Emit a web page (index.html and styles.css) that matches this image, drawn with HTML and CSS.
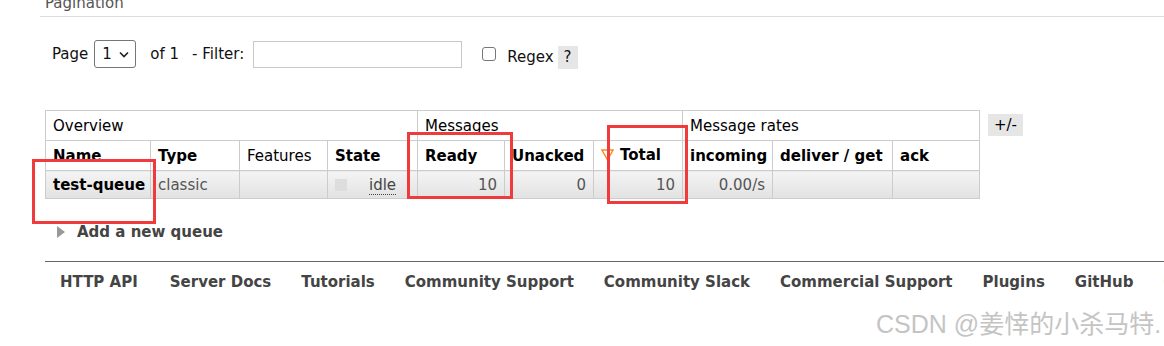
FILE: index.html
```html
<!DOCTYPE html>
<html lang="en">
<head>
    <meta charset="UTF-8">
    <meta name="viewport" content="width=device-width, initial-scale=1.0">
    <title>Queues</title>
    <link rel="stylesheet" href="styles.css">
</head>
<body>
    <div class="section">
        <h2 class="section-title">Pagination</h2>
        <div class="pagination">
            <span>Page</span>
            <span class="select">1
                <svg width="10" height="7" viewBox="0 0 10 7"><polyline points="1,1.5 5,5.5 9,1.5" fill="none" stroke="#222" stroke-width="1.6"/></svg>
            </span>
            <span class="of">of 1</span>
            <span class="filter-label">- Filter:</span>
            <input class="filter" type="text">
            <span class="checkbox"></span>
            <span class="regex">Regex</span>
            <span class="help">?</span>
        </div>
    </div>

    <div class="queues">
        <table class="list">
            <colgroup>
                <col style="width: 105px">
                <col style="width: 89px">
                <col style="width: 88px">
                <col style="width: 90px">
                <col style="width: 87px">
                <col style="width: 89px">
                <col style="width: 89px">
                <col style="width: 90px">
                <col style="width: 120px">
                <col style="width: 87px">
            </colgroup>
            <tr class="group-row">
                <th colspan="4">Overview</th>
                <th colspan="3">Messages</th>
                <th colspan="3">Message rates</th>
            </tr>
            <tr class="head-row">
                <th>Name</th>
                <th>Type</th>
                <th class="plain">Features</th>
                <th>State</th>
                <th>Ready</th>
                <th>Unacked</th>
                <th><span class="sort-arrow"><svg width="13" height="12" viewBox="0 0 13 12"><polygon points="1,1 12,1 6.5,11" fill="none" stroke="#f98a1f" stroke-width="1.4"/></svg></span>Total</th>
                <th>incoming</th>
                <th>deliver / get</th>
                <th>ack</th>
            </tr>
            <tr class="data-row">
                <td class="name">test-queue</td>
                <td>classic</td>
                <td></td>
                <td><span class="state-dot"></span><span class="state">idle</span></td>
                <td class="num">10</td>
                <td class="num">0</td>
                <td class="num">10</td>
                <td class="num">0.00/s</td>
                <td></td>
                <td></td>
            </tr>
        </table>
        <span class="toggle-cols">+/-</span>
    </div>

    <div class="add-queue"><span class="arrow-right"></span>Add a new queue</div>

    <div class="footer">
        <a href="#">HTTP API</a>
        <a href="#">Server Docs</a>
        <a href="#">Tutorials</a>
        <a href="#">Community Support</a>
        <a href="#">Community Slack</a>
        <a href="#">Commercial Support</a>
        <a href="#">Plugins</a>
        <a href="#">GitHub</a>
        <a href="#">Changelog</a>
    </div>

    <!-- annotation boxes -->
    <div class="mark mark-name"></div>
    <div class="mark mark-ready"></div>
    <div class="mark mark-total"></div>

    <div class="watermark">CSDN @姜悻的小杀马特.</div>
</body>
</html>
```

FILE: styles.css
```css
html, body {
    overflow: hidden;
}

body {
    margin: 0;
    position: relative;
    height: 346px;
    font-family: "DejaVu Sans", Verdana, sans-serif;
    font-size: 15px;
    color: #111;
    background: #fff;
}

.section {
    margin-left: 40px;
}

.section-title {
    margin: -5px 0 0;
    padding: 0 0 4px 5px;
    font-size: 15px;
    font-weight: normal;
    line-height: 17px;
    color: #555;
    border-bottom: 1px solid #ddd;
}

.pagination {
    display: flex;
    align-items: center;
    margin: 23px 0 0 12px;
    height: 28px;
}

.select {
    display: flex;
    align-items: center;
    box-sizing: border-box;
    height: 28px;
    width: 42px;
    margin-left: 6px;
    padding: 0 6px 0 7px;
    border: 1px solid #767676;
    border-radius: 3px;
    justify-content: space-between;
}

.of {
    margin-left: 14px;
}

.filter-label {
    margin-left: 13px;
}

.filter {
    box-sizing: border-box;
    width: 209px;
    height: 27px;
    margin: 0 0 0 9px;
    border: 1px solid #c8c8c8;
    padding: 0;
}

.checkbox {
    box-sizing: border-box;
    width: 14px;
    height: 14px;
    margin-left: 20px;
    border: 1px solid #767676;
    border-radius: 3px;
}

.regex {
    margin: 6px 0 0 11px;
}

.help {
    margin: 6px 0 0 4px;
    width: 20px;
    height: 23px;
    line-height: 23px;
    text-align: center;
    background-color: #e6e6e6;
}

.queues {
    display: flex;
    align-items: flex-start;
    margin: 42px 0 0 45px;
}

table.list {
    border-collapse: collapse;
    table-layout: fixed;
    width: 935px;
}

table.list th,
table.list td {
    border: 1px solid #ccc;
    padding: 0 7px;
    white-space: nowrap;
    text-align: left;
}

table.list th {
    height: 29px;
    font-weight: bold;
    color: #000;
}

table.list .group-row th,
table.list th.plain {
    font-weight: normal;
}

table.list td {
    height: 27px;
    color: #555;
    background: linear-gradient(#f4f4f4, #e2e2e2);
}

table.list td.name {
    font-weight: bold;
    color: #000;
}

table.list td.num {
    text-align: right;
}

.sort-arrow {
    display: inline-block;
    margin-right: 6px;
    vertical-align: -1px;
}

.state-dot {
    display: inline-block;
    width: 12px;
    height: 12px;
    background-color: #ddd;
    vertical-align: -1px;
}

.state {
    margin-left: 22px;
    color: #444;
    border-bottom: 1px dotted #444;
}

.toggle-cols {
    margin: 4px 0 0 8px;
    width: 35px;
    height: 22px;
    line-height: 22px;
    text-align: center;
    background-color: #e6e6e6;
    color: #000;
}

.add-queue {
    display: flex;
    align-items: center;
    margin: 24px 0 0 57px;
    font-weight: bold;
    color: #444;
}

.arrow-right {
    width: 0;
    height: 0;
    margin-right: 12px;
    border-top: 6px solid transparent;
    border-bottom: 6px solid transparent;
    border-left: 8px solid #999;
}

.footer {
    display: flex;
    margin: 20px 0 0 45px;
    padding-top: 11px;
    border-top: 1px solid #666;
    white-space: nowrap;
}

.footer a {
    padding: 0 15px;
    font-weight: bold;
    color: #444;
    text-decoration: none;
}

.footer a:first-child {
    padding-right: 17px;
}

.mark {
    position: absolute;
    box-sizing: border-box;
    border: 3px solid #ef3b3b;
}

.mark-name {
    left: 32px;
    top: 159px;
    width: 124px;
    height: 65px;
}

.mark-ready {
    left: 407px;
    top: 132px;
    width: 106px;
    height: 67px;
}

.mark-total {
    left: 607px;
    top: 125px;
    width: 81px;
    height: 79px;
}

.watermark {
    position: absolute;
    left: 876px;
    top: 312px;
    font-family: "Liberation Sans", "Noto Sans CJK SC", sans-serif;
    font-size: 25px;
    line-height: 25px;
    color: #c4c4c4;
    white-space: nowrap;
}
```
